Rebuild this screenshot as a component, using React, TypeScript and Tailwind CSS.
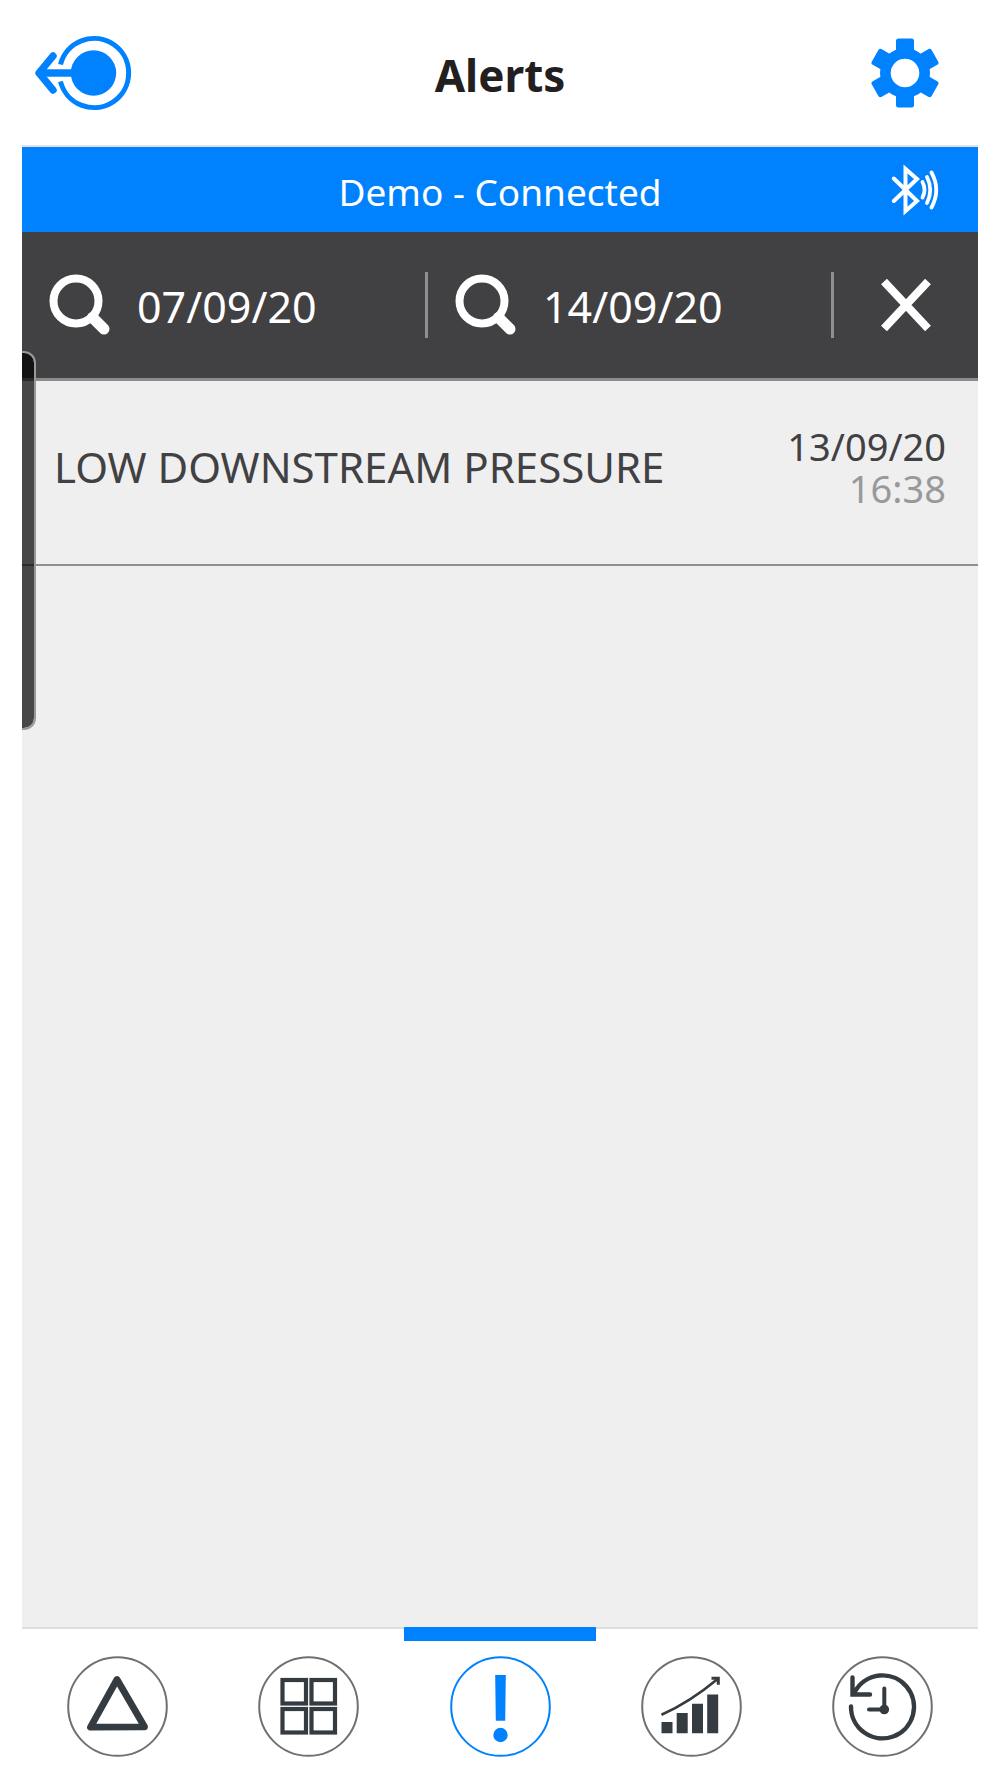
import type { ReactNode } from "react";

function BackIcon() {
  return (
    <svg viewBox="0 0 98 76" className="h-[76px] w-[98px]" fill="none" stroke="#0082ff">
      <path d="M26.5 29.5A34.6 34.6 0 1 1 26.5 46.5" strokeWidth="5" />
      <circle cx="59.5" cy="38" r="22.7" fill="#0082ff" stroke="none" />
      <path d="M6 38H45" strokeWidth="7.4" />
      <path d="M19 21L5 38L19 55" strokeWidth="7.4" strokeLinecap="round" strokeLinejoin="round" />
    </svg>
  );
}

function GearIcon() {
  return (
    <svg viewBox="-35 -35 70 70" className="size-[70px]" fill="#0082ff">
      <circle r="25" />
      <rect x="-9" y="-34.5" width="18" height="69" rx="2.5" />
      <rect x="-9" y="-34.5" width="18" height="69" rx="2.5" transform="rotate(60)" />
      <rect x="-9" y="-34.5" width="18" height="69" rx="2.5" transform="rotate(120)" />
      <circle r="14.3" fill="#ffffff" />
    </svg>
  );
}

function BluetoothIcon() {
  return (
    <svg viewBox="0 0 50 54" className="h-[54px] w-[50px]" fill="none" stroke="#ffffff">
      <path d="M3.8 15.5L27 38L15.5 48V6L27 16L3.8 38" strokeWidth="4" strokeLinecap="round" />
      <g strokeWidth="3.8" strokeLinecap="round">
        <path d="M32.5 19Q36.5 27 32.5 34.5" />
        <path d="M37 14Q43.5 27 37 40" />
        <path d="M41.5 9.5Q51 27 41.5 44.5" />
      </g>
    </svg>
  );
}

function SearchIcon() {
  return (
    <svg viewBox="0 0 62 62" className="size-[62px] shrink-0" fill="none" stroke="#ffffff">
      <circle cx="27" cy="27" r="22.5" strokeWidth="8" />
      <path d="M43.5 43.5L55 55" strokeWidth="11" strokeLinecap="round" />
    </svg>
  );
}

function DateFilter({ label, value }: { label: string; value: string }) {
  return (
    <button
      type="button"
      aria-label={`${label} ${value}`}
      className="my-10 flex items-center gap-[26px] border-r-[3px] border-[#8f8f8f] pl-[27px]"
    >
      <SearchIcon />
      <span className="pt-1 text-[43px] leading-[50px]">{value}</span>
    </button>
  );
}

function NavItem({ label, active, children }: { label: string; active?: boolean; children: ReactNode }) {
  return (
    <a
      href={`#${label.toLowerCase()}`}
      aria-label={label}
      aria-current={active ? "page" : undefined}
      className="relative flex flex-1 justify-center pt-[27px] pb-[21px]"
    >
      {active && <span className="absolute inset-x-0 -top-0.5 h-[14px] bg-[#0082ff]" />}
      <svg viewBox="0 0 101 101" className="size-[101px]" fill="none" stroke="#343b41">
        <circle cx="50.5" cy="50.5" r="49.3" strokeWidth="2" stroke={active ? "#0082ff" : "#707070"} />
        {children}
      </svg>
    </a>
  );
}

const alerts = [{ name: "LOW DOWNSTREAM PRESSURE", date: "13/09/20", time: "16:38" }];

export default function App() {
  return (
    <div className="flex min-h-screen flex-col bg-white px-[22px] font-['Noto_Sans',sans-serif]">
      <header className="grid grid-cols-[1fr_auto_1fr] items-center border-b-2 border-[#e2e4e2] pr-[38px] pl-3">
        <button type="button" aria-label="Disconnect" className="justify-self-start">
          <BackIcon />
        </button>
        <h1 className="pt-12 pb-[43px] pl-[26px] text-[44px] leading-[54px] font-bold text-[#231f20]">Alerts</h1>
        <button type="button" aria-label="Settings" className="justify-self-end">
          <GearIcon />
        </button>
      </header>

      <div className="relative flex flex-1 flex-col">
        <div className="grid h-[85px] grid-cols-[1fr_auto_1fr] items-center bg-[#0082ff] pr-[38px] text-white">
          <p className="col-start-2 pt-1 pl-[38px] text-[37px] leading-[50px]">Demo - Connected</p>
          <span className="justify-self-end">
            <BluetoothIcon />
          </span>
        </div>

        <div className="grid h-[149px] grid-cols-[406fr_406fr_144fr] border-b-[3px] border-[#8b8b8b] bg-[#414042] text-white">
          <DateFilter label="From" value="07/09/20" />
          <DateFilter label="To" value="14/09/20" />
          <button type="button" aria-label="Clear dates" className="flex items-center justify-center">
            <svg viewBox="0 0 50 52" className="h-[52px] w-[50px]" stroke="#ffffff" strokeWidth="8">
              <path d="M3 2.5L47 49.5M47 2.5L3 49.5" />
            </svg>
          </button>
        </div>

        <main className="flex-1 bg-[#efefef]">
          <ul>
            {alerts.map((a) => (
              <li
                key={a.name}
                className="flex items-center justify-between border-b-2 border-[#8f8f8f] pt-11 pr-8 pb-[55px] pl-8 text-[#414042]"
              >
                <span className="text-[42px] leading-[50px]">{a.name}</span>
                <span className="flex flex-col items-end text-[38px] leading-[42px]">
                  <span>{a.date}</span>
                  <span className="text-[#999999]">{a.time}</span>
                </span>
              </li>
            ))}
          </ul>
        </main>

        <div className="absolute top-[204px] left-0 h-[379px] w-[14px] rounded-r-xl border-y-2 border-r-2 border-[#999999] bg-black/70 bg-clip-padding" />
      </div>

      <nav aria-label="Main" className="flex border-t-2 border-[#dedede]">
        <NavItem label="Status">
          <path d="M50 23.5L23.5 71.2L77.5 70.8Z" strokeWidth="6.8" strokeLinejoin="round" />
        </NavItem>
        <NavItem label="Dashboard">
          <g strokeWidth="4.2">
            <rect x="24.5" y="24" width="23.5" height="23.5" />
            <rect x="53.5" y="24" width="23.5" height="23.5" />
            <rect x="24.5" y="53" width="23.5" height="23.5" />
            <rect x="53.5" y="53" width="23.5" height="23.5" />
          </g>
        </NavItem>
        <NavItem label="Alerts" active>
          <g fill="#0082ff" stroke="none">
            <path d="M45.2 19H55.8L55.2 64.7H45.8Z" />
            <circle cx="50.5" cy="79" r="7.2" />
          </g>
        </NavItem>
        <NavItem label="Trends">
          <path
            d="M20.5 66h11v11.3h-11zM35.7 57h11v20.3h-11zM51 47.7h11v29.6h-11zM66.2 38.5h11v38.8h-11z"
            fill="#343b41"
            stroke="none"
          />
          <path d="M20.5 58.8Q49 46 76 23.5" strokeWidth="2.6" />
          <path d="M70.5 22.2H77.3V28.7" strokeWidth="3" />
        </NavItem>
        <NavItem label="History">
          <g strokeWidth="4.4" strokeLinecap="round">
            <path d="M19 50.5A31.5 31.5 0 1 0 23 35.5" />
            <path d="M20.5 21.5V38.5H38" strokeLinejoin="miter" />
            <path d="M52.3 32.5V53.5H37" strokeWidth="4" />
          </g>
          <circle cx="52.3" cy="53.5" r="4.8" fill="#343b41" stroke="none" />
        </NavItem>
      </nav>
    </div>
  );
}
